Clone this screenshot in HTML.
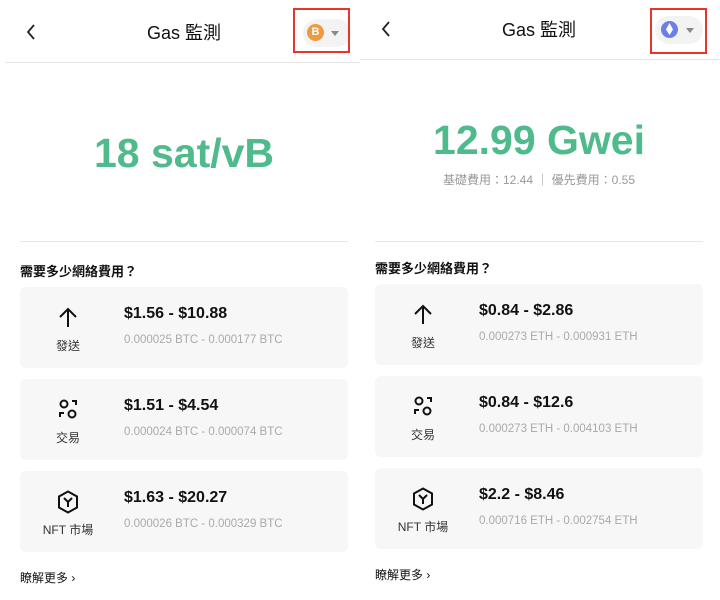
<!DOCTYPE html>
<html><head><meta charset="utf-8"><style>
*{margin:0;padding:0;box-sizing:border-box}
body{width:720px;height:600px;background:#fff;position:relative;overflow:hidden;font-family:"Liberation Sans","Noto Sans CJK TC",sans-serif;color:#111}
.a{position:absolute}
.title{font-size:18px;transform:translateX(-50%);white-space:nowrap}
.line{height:1px;background:#e6e6e6}
.sel{width:48px;height:28px;border-radius:14px;background:#f3f3f3}
.red{border:2px solid #e8352b}
.big{font-size:41px;font-weight:bold;color:#4fba8b;transform:translateX(-50%);white-space:nowrap}
.h{font-size:13px;font-weight:bold}
.card{width:328px;height:81px;background:#f7f7f7;border-radius:6px}
.price{font-size:16px;font-weight:bold;position:absolute;left:104px;top:18px}
.sub{font-size:11.5px;color:#aaa;position:absolute;left:104px;top:47px}
.lbl{font-size:12px;color:#333;position:absolute;width:96px;text-align:center;top:50px}
.ic{position:absolute;left:37px;top:19px}
.more{font-size:12px}
</style></head><body>
<!-- left -->
<svg class="a" style="left:25px;top:23px" width="12" height="18"><path d="M9 2L3 9l6 7" stroke="#222" stroke-width="1.8" fill="none"/></svg>
<div class="a title" style="left:184px;top:19px">Gas 監測</div>
<div class="a sel" style="left:303px;top:19px"></div>
<div class="a" style="left:307px;top:24px;width:17px;height:17px;border-radius:50%;background:#ee9a40;color:#fff;font-size:11px;font-weight:bold;text-align:center;line-height:17px">B</div>
<div class="a" style="left:331px;top:31px;border-left:4px solid transparent;border-right:4px solid transparent;border-top:5px solid #888"></div>
<div class="a red" style="left:293px;top:8px;width:57px;height:45px"></div>
<div class="a line" style="left:5px;top:62px;width:355px"></div>
<div class="a big" style="left:184px;top:130px">18 sat/vB</div>
<div class="a line" style="left:20px;top:241px;width:328px"></div>
<div class="a h" style="left:20px;top:261px">需要多少網絡費用？</div>

<div class="a card" style="left:20px;top:287px">
<svg class="ic" width="22" height="22"><path d="M11 21V3M3 11l8-8 8 8" stroke="#111" stroke-width="2" fill="none"/></svg>
<div class="lbl">發送</div><div class="price">$1.56 - $10.88</div><div class="sub">0.000025 BTC - 0.000177 BTC</div></div>
<div class="a card" style="left:20px;top:379px">
<svg class="ic" width="22" height="22"><circle cx="7" cy="6" r="3.5" stroke="#111" stroke-width="2" fill="none"/><circle cx="15" cy="16" r="3.5" stroke="#111" stroke-width="2" fill="none"/><path d="M15 3l4 0 0 4M3 19l0-4 4 0" stroke="#111" stroke-width="2" fill="none"/></svg>
<div class="lbl">交易</div><div class="price">$1.51 - $4.54</div><div class="sub">0.000024 BTC - 0.000074 BTC</div></div>
<div class="a card" style="left:20px;top:471px">
<svg class="ic" width="22" height="24"><path d="M11 1.5l9 5v11l-9 5-9-5v-11z" stroke="#111" stroke-width="2" fill="none"/><path d="M7 8l4 4 4-4M11 12v5" stroke="#111" stroke-width="2" fill="none"/></svg>
<div class="lbl">NFT 市場</div><div class="price">$1.63 - $20.27</div><div class="sub">0.000026 BTC - 0.000329 BTC</div></div>
<div class="a more" style="left:20px;top:569px">瞭解更多 ›</div>

<!-- right -->
<svg class="a" style="left:380px;top:20px" width="12" height="18"><path d="M9 2L3 9l6 7" stroke="#222" stroke-width="1.8" fill="none"/></svg>
<div class="a title" style="left:539px;top:16px">Gas 監測</div>
<div class="a sel" style="left:655px;top:16px"></div>
<div class="a" style="left:661px;top:21px;width:17px;height:17px;border-radius:50%;background:#6a7fe8"></div>
<svg class="a" style="left:664px;top:22px" width="11" height="15"><path d="M5.5 1L2 7.5 5.5 13 9 7.5z" fill="#fff"/></svg>
<div class="a" style="left:686px;top:28px;border-left:4px solid transparent;border-right:4px solid transparent;border-top:5px solid #888"></div>
<div class="a red" style="left:650px;top:8px;width:57px;height:46px"></div>
<div class="a line" style="left:360px;top:59px;width:360px"></div>
<div class="a big" style="left:539px;top:117px">12.99 Gwei</div>
<div class="a" style="left:539px;top:171px;transform:translateX(-50%);font-size:12px;color:#999;white-space:nowrap">基礎費用：12.44 ｜ 優先費用：0.55</div>
<div class="a line" style="left:375px;top:241px;width:328px"></div>
<div class="a h" style="left:375px;top:258px">需要多少網絡費用？</div>

<div class="a card" style="left:375px;top:284px">
<svg class="ic" width="22" height="22"><path d="M11 21V3M3 11l8-8 8 8" stroke="#111" stroke-width="2" fill="none"/></svg>
<div class="lbl">發送</div><div class="price">$0.84 - $2.86</div><div class="sub">0.000273 ETH - 0.000931 ETH</div></div>
<div class="a card" style="left:375px;top:376px">
<svg class="ic" width="22" height="22"><circle cx="7" cy="6" r="3.5" stroke="#111" stroke-width="2" fill="none"/><circle cx="15" cy="16" r="3.5" stroke="#111" stroke-width="2" fill="none"/><path d="M15 3l4 0 0 4M3 19l0-4 4 0" stroke="#111" stroke-width="2" fill="none"/></svg>
<div class="lbl">交易</div><div class="price">$0.84 - $12.6</div><div class="sub">0.000273 ETH - 0.004103 ETH</div></div>
<div class="a card" style="left:375px;top:468px">
<svg class="ic" width="22" height="24"><path d="M11 1.5l9 5v11l-9 5-9-5v-11z" stroke="#111" stroke-width="2" fill="none"/><path d="M7 8l4 4 4-4M11 12v5" stroke="#111" stroke-width="2" fill="none"/></svg>
<div class="lbl">NFT 市場</div><div class="price">$2.2 - $8.46</div><div class="sub">0.000716 ETH - 0.002754 ETH</div></div>
<div class="a more" style="left:375px;top:566px">瞭解更多 ›</div>
</body></html>
